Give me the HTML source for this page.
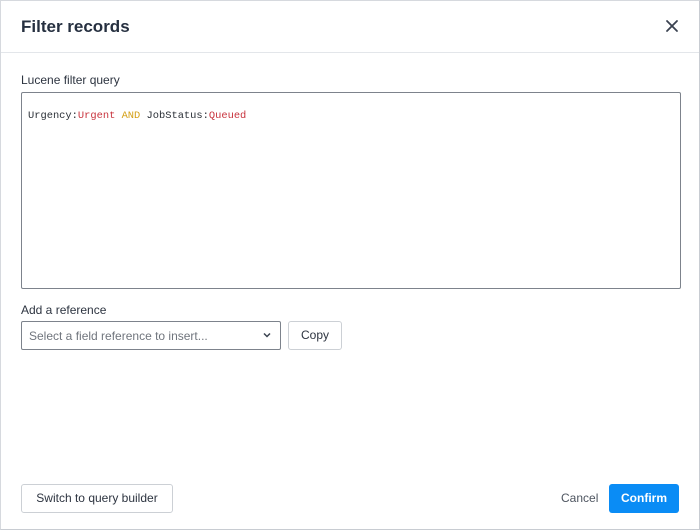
<!DOCTYPE html>
<html><head><style>
*{box-sizing:border-box;margin:0;padding:0}
body{width:700px;height:530px;background:#fff;font-family:"Liberation Sans",sans-serif;position:relative;overflow:hidden}
.frame{position:absolute;left:0;top:0;width:700px;height:530px;border:1px solid #d6d9de;border-right-color:#c8ccd2;border-bottom-color:#c8ccd2}
.title{position:absolute;left:21px;top:17px;font-size:17px;font-weight:bold;color:#263040}
.hdr{position:absolute;left:1px;right:1px;top:52px;height:1px;background:#e3e6ea}
.x{position:absolute;left:664px;top:18px}
.lbl{position:absolute;left:21px;font-size:12px;color:#2d3440}
.ta{position:absolute;left:21px;top:92px;width:660px;height:197px;border:1px solid #7d838c;border-radius:2px}
.code{position:absolute;left:28px;top:110px;font-family:"Liberation Mono",monospace;font-size:10.4px;color:#2a2f36}
.r{color:#c8323c}.y{color:#d4a017}
.sel{position:absolute;left:21px;top:321px;width:260px;height:29px;border:1px solid #7d838c;border-radius:2px;font-size:12px;color:#70757d;padding:7px 0 0 7px}
.btn{position:absolute;border:1px solid #ccd0d5;border-radius:3px;font-size:12px;color:#2d3440;text-align:center;background:#fff}
.confirm{position:absolute;left:609px;top:484px;width:70px;height:29px;background:#0a8cf5;border-radius:3px;color:#fff;font-size:12px;font-weight:bold;text-align:center;line-height:29px}
.cancel{position:absolute;left:561px;top:491px;font-size:12px;color:#4e5560}
</style></head><body>
<div class="frame"></div>
<div class="title">Filter records</div>
<svg class="x" width="16" height="16" viewBox="0 0 16 16"><path d="M3 3L13 13M13 3L3 13" stroke="#3a4250" stroke-width="1.8" stroke-linecap="round"/></svg>
<div class="hdr"></div>
<div class="lbl" style="top:73px">Lucene filter query</div>
<div class="ta"></div>
<div class="code">Urgency:<span class="r">Urgent</span> <span class="y">AND</span> JobStatus:<span class="r">Queued</span></div>
<div class="lbl" style="top:303px">Add a reference</div>
<div class="sel">Select a field reference to insert...</div>
<svg style="position:absolute;left:263px;top:332px" width="8" height="6" viewBox="0 0 8 6"><path d="M1 1.5L4 4.5L7 1.5" stroke="#3a4250" stroke-width="1.5" fill="none"/></svg>
<div class="btn" style="left:288px;top:321px;width:54px;height:29px;line-height:27px">Copy</div>
<div class="btn" style="left:21px;top:484px;width:152px;height:29px;line-height:27px">Switch to query builder</div>
<div class="cancel">Cancel</div>
<div class="confirm">Confirm</div>
</body></html>
